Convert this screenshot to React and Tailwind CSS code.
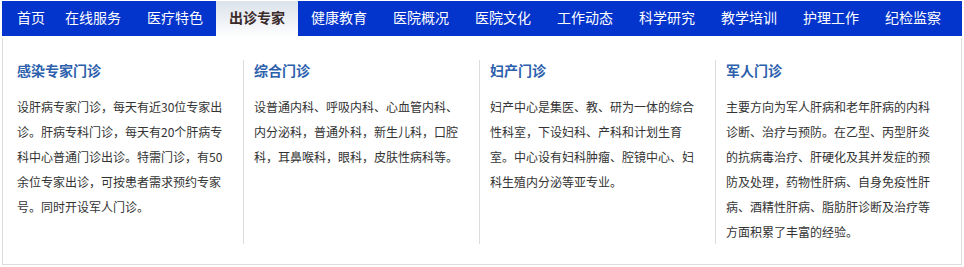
const navItems = [
  '首页',
  '在线服务',
  '医疗特色',
  '出诊专家',
  '健康教育',
  '医院概况',
  '医院文化',
  '工作动态',
  '科学研究',
  '教学培训',
  '护理工作',
  '纪检监察',
]

const clinics = [
  {
    title: '感染专家门诊',
    text: '设肝病专家门诊，每天有近30位专家出诊。肝病专科门诊，每天有20个肝病专科中心普通门诊出诊。特需门诊，有50余位专家出诊，可按患者需求预约专家号。同时开设军人门诊。',
  },
  {
    title: '综合门诊',
    text: '设普通内科、呼吸内科、心血管内科、内分泌科，普通外科，新生儿科，口腔科，耳鼻喉科，眼科，皮肤性病科等。',
  },
  {
    title: '妇产门诊',
    text: '妇产中心是集医、教、研为一体的综合性科室，下设妇科、产科和计划生育室。中心设有妇科肿瘤、腔镜中心、妇科生殖内分泌等亚专业。',
  },
  {
    title: '军人门诊',
    text: '主要方向为军人肝病和老年肝病的内科诊断、治疗与预防。在乙型、丙型肝炎的抗病毒治疗、肝硬化及其并发症的预防及处理，药物性肝病、自身免疫性肝病、酒精性肝病、脂肪肝诊断及治疗等方面积累了丰富的经验。',
  },
]

export default function App() {
  const active = '出诊专家'

  return (
    <div className="bg-white w-[964px] h-[267px] pt-[1px] pl-[2px] font-['Noto_Sans_CJK_SC',sans-serif]">
      <div className="w-[960px]">
        {/* Top navigation */}
        <nav className="flex h-[35px] bg-[#0334cc] text-[14px]">
          {navItems.map((item, i) => {
            const isActive = item === active
            return (
              <a
                key={item}
                href="#"
                className={
                  i === 0
                    ? 'block w-[50px] pl-[15px] leading-[32px] text-white whitespace-nowrap'
                    : isActive
                      ? 'block w-[82px] h-[37px] text-center leading-[32px] font-bold text-[#3a2a2a] bg-gradient-to-b from-[#dbe2ea] to-white relative z-10 whitespace-nowrap'
                      : 'block w-[82px] text-center leading-[32px] text-white whitespace-nowrap'
                }
              >
                {item}
              </a>
            )
          })}
        </nav>

        {/* Dropdown panel */}
        <div className="mt-[2px] h-[227px] border-x border-b border-[#dcdcdc] pl-[4px] pt-[22px]">
          <div className="flex">
            {clinics.map((c, i) => (
              <div
                key={c.title}
                className={
                  i === 0
                    ? 'w-[236px] pl-[10px]'
                    : 'w-[236px] pl-[10px] border-l border-[#dcdcdc]'
                }
              >
                <h3 className="text-[14px] leading-[20px] font-bold text-[#2c60ad]">
                  {c.title}
                </h3>
                <p className="mt-[14px] w-[210px] text-[12px] leading-[25px] text-[#333]">
                  {c.text}
                </p>
              </div>
            ))}
          </div>
        </div>
      </div>
    </div>
  )
}
